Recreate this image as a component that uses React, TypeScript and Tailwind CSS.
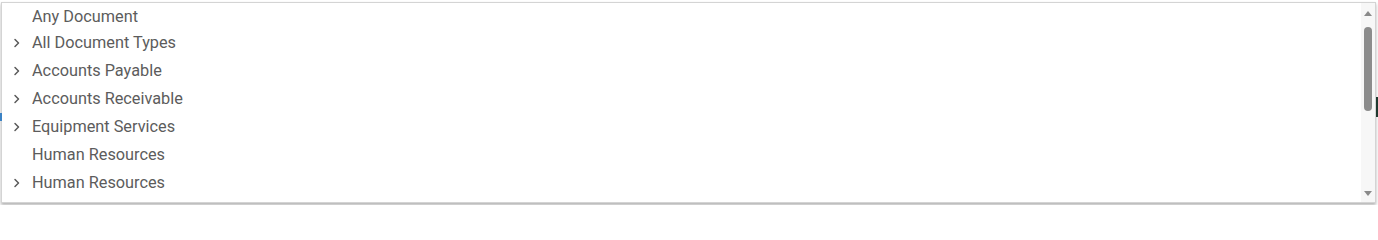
const rows = [
  { label: "Any Document", expandable: false },
  { label: "All Document Types", expandable: true },
  { label: "Accounts Payable", expandable: true },
  { label: "Accounts Receivable", expandable: true },
  { label: "Equipment Services", expandable: true },
  { label: "Human Resources", expandable: false },
  { label: "Human Resources", expandable: true },
];

function Chevron() {
  return (
    <svg viewBox="0 0 8 10" className="h-[10px] w-[8px]" fill="none">
      <path d="M2 1.5 L5.5 5 L2 8.5" stroke="#5a5a5a" strokeWidth="1.5" strokeLinecap="round" strokeLinejoin="round" />
    </svg>
  );
}

function Scrollbar() {
  return (
    <div className="flex w-[14px] shrink-0 flex-col items-center bg-[#f7f7f7]">
      <div className="flex h-[18px] items-center justify-center pt-[2px]">
        <div className="h-0 w-0 border-x-[4px] border-b-[5px] border-x-transparent border-b-[#8a8a8a]" />
      </div>
      <div className="flex flex-1 flex-col pt-[6px]">
        <div className="h-[84px] w-[8px] rounded-full bg-[#8c8c8c]" />
      </div>
      <div className="flex h-[16px] items-center justify-center pb-[2px]">
        <div className="h-0 w-0 border-x-[4px] border-t-[5px] border-x-transparent border-t-[#8a8a8a]" />
      </div>
    </div>
  );
}

export default function App() {
  return (
    <div className="relative h-[205px] w-full overflow-hidden bg-white font-['Roboto',sans-serif]">
      <div className="absolute left-0 top-[113px] h-[8px] w-[2px] bg-[#3b82c4]" />
      <div className="absolute right-0 top-[97px] h-[20px] w-[2px] bg-[#1f3a30]" />
      <div className="ml-[1px] mt-[2px] flex h-[201px] w-[1375px] border border-[#d4d4d4] bg-white shadow-[0_2px_3px_rgba(0,0,0,0.3)]">
        <ul className="flex min-w-0 flex-1 flex-col text-[16.3px] text-[#5c5c5c]">
          {rows.map((row, i) => (
            <li
              key={i}
              className={`flex items-center ${i === 0 ? "h-[26px] pt-[2px]" : "h-[28px]"}`}
            >
              <span className="flex w-[30px] shrink-0 pl-[11px]">
                {row.expandable && <Chevron />}
              </span>
              <span className="truncate">{row.label}</span>
            </li>
          ))}
        </ul>
        <Scrollbar />
      </div>
    </div>
  );
}
